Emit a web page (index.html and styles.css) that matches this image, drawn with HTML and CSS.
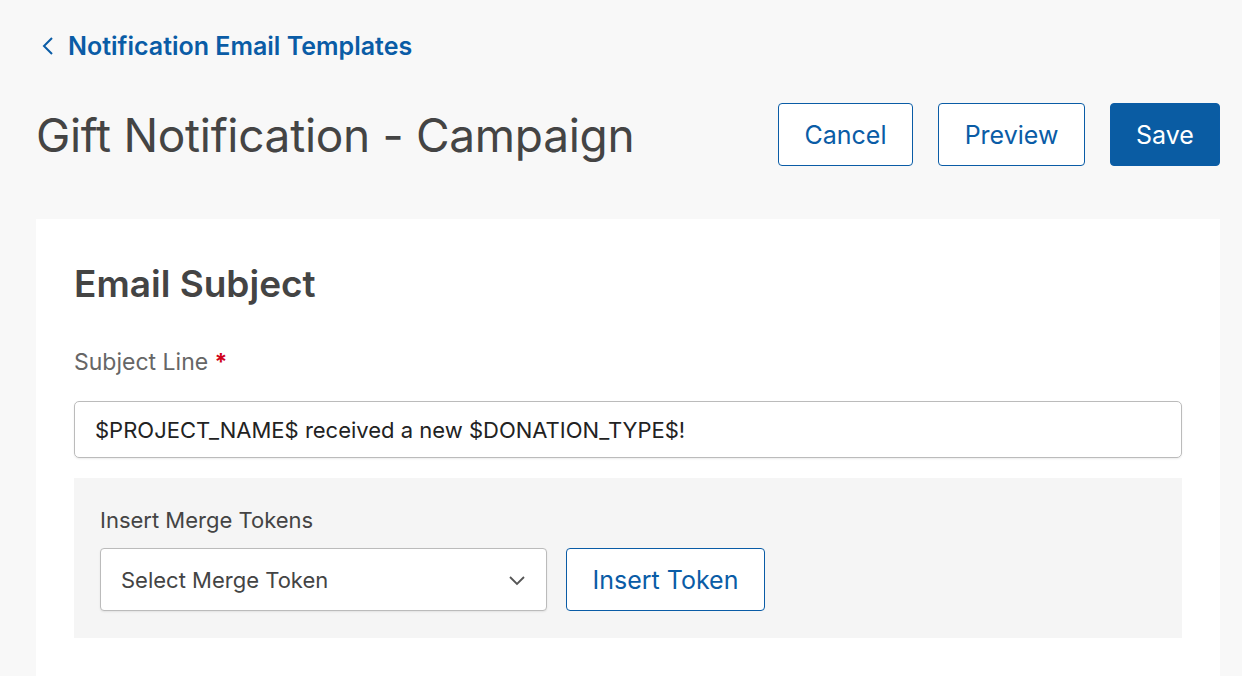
FILE: index.html
```html
<!DOCTYPE html>
<html>
<head>
<meta charset="utf-8">
<link rel="stylesheet" href="styles.css">
</head>
<body>
<div class="page">
  <a class="back" href="#">
    <svg class="chev" width="14" height="20" viewBox="0 0 14 20"><path d="M11 2 L3 10 L11 18" fill="none" stroke="#0a5ca6" stroke-width="2"/></svg>
    <span>Notification Email Templates</span>
  </a>
  <div class="header">
    <h1 class="title">Gift Notification - Campaign</h1>
    <div class="actions">
      <button class="btn btn-outline btn-cancel">Cancel</button>
      <button class="btn btn-outline btn-preview">Preview</button>
      <button class="btn btn-primary">Save</button>
    </div>
  </div>
  <div class="card">
    <h2 class="section-title">Email Subject</h2>
    <label class="label">Subject Line <span class="req">*</span></label>
    <div class="input">$PROJECT_NAME$ received a new $DONATION_TYPE$!</div>
    <div class="tokens">
      <div class="tokens-label">Insert Merge Tokens</div>
      <div class="tokens-row">
        <div class="select">
          <span>Select Merge Token</span>
          <svg width="18" height="12" viewBox="0 0 18 12"><path d="M2 3 L9 10 L16 3" fill="none" stroke="#555" stroke-width="1.8"/></svg>
        </div>
        <button class="btn btn-outline btn-insert">Insert Token</button>
      </div>
    </div>
  </div>
</div>
</body>
</html>
```

FILE: styles.css
```css
* { box-sizing: border-box; }
html, body { margin: 0; padding: 0; }
body {
  background: #f8f8f8;
  font-family: Inter, "Noto Sans", sans-serif;
  width: 1242px;
  height: 676px;
  overflow: hidden;
}
.page {
  padding: 29px 22px 0 36px;
}
.back {
  display: flex;
  align-items: center;
  gap: 13px;
  text-decoration: none;
  color: #0a5ca6;
  font-size: 25px;
  font-weight: 600;
  padding-left: 5px;
  height: 34px;
}
.chev { display: block; }
.header {
  display: flex;
  justify-content: space-between;
  align-items: center;
  margin-top: 40px;
  height: 63px;
}
.title {
  margin: 0;
  font-size: 46px;
  font-weight: 400;
  color: #444;
  letter-spacing: -0.3px;
}
.actions {
  display: flex;
  gap: 25px;
}
.btn {
  font-family: Inter, "Noto Sans", sans-serif;
  font-size: 25px;
  height: 63px;
  border-radius: 4px;
  border: 1px solid #0a5ca6;
  cursor: pointer;
}
.btn-outline {
  background: #fff;
  color: #0a5ca6;
}
.btn-primary {
  background: #0a5ca3;
  color: #fff;
  width: 110px;
}
.btn-cancel { width: 135px; }
.btn-preview { width: 147px; }
.card {
  margin-top: 53px;
  background: #fff;
  height: 460px;
  padding: 40px 38px 0 38px;
}
.section-title {
  margin: 0;
  font-size: 37px;
  font-weight: 600;
  color: #444;
  line-height: 50px;
}
.label {
  display: block;
  margin-top: 38px;
  font-size: 23px;
  color: #666;
  line-height: 30px;
}
.req { color: #d0021b; font-weight: 700; }
.input {
  margin-top: 24px;
  height: 57px;
  border: 1px solid #bbb;
  border-radius: 5px;
  display: flex;
  align-items: center;
  padding-left: 20px;
  font-size: 22px;
  color: #222;
  box-shadow: 0 1px 2px rgba(0,0,0,0.08);
}
.tokens {
  margin-top: 20px;
  background: #f5f5f5;
  height: 160px;
  padding: 28px 26px 0 26px;
}
.tokens-label {
  font-size: 22px;
  color: #444;
  line-height: 28px;
}
.tokens-row {
  display: flex;
  gap: 19px;
  margin-top: 14px;
}
.select {
  width: 447px;
  height: 63px;
  background: #fff;
  border: 1px solid #bbb;
  border-radius: 4px;
  display: flex;
  align-items: center;
  justify-content: space-between;
  padding: 0 20px 0 20px;
  font-size: 22px;
  color: #444;
  box-shadow: 0 1px 2px rgba(0,0,0,0.08);
}
.btn-insert {
  width: 199px;
  font-size: 25px;
}
```
